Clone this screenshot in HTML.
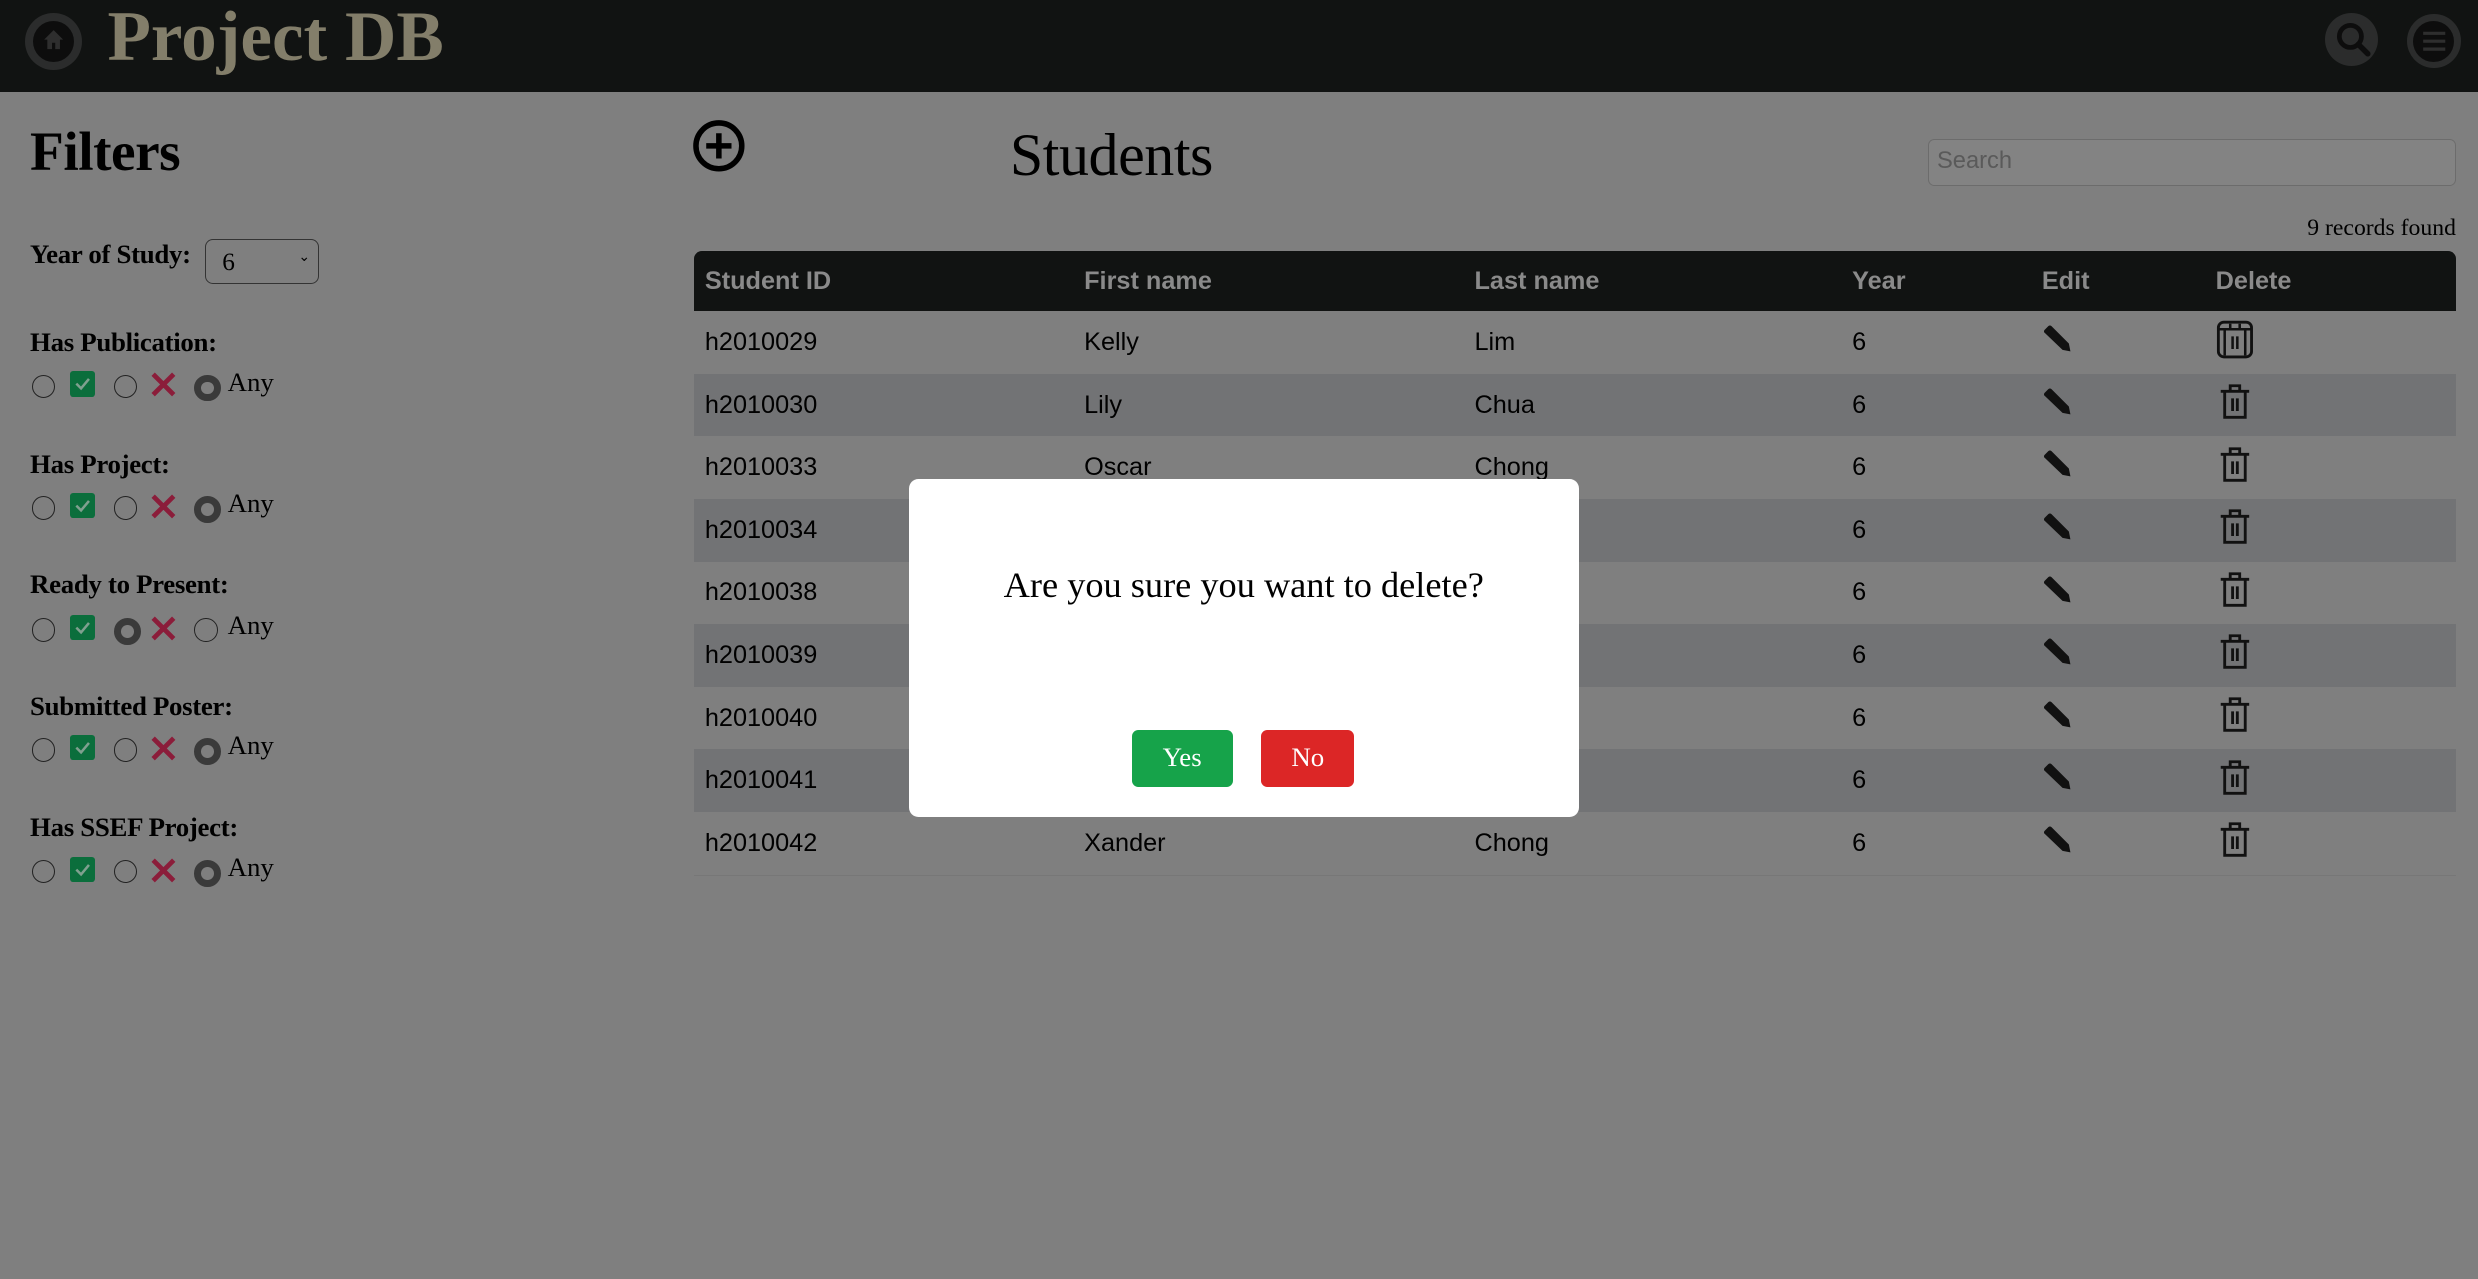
<!DOCTYPE html>
<html><head><meta charset="utf-8"><style>
html{zoom:1.5804}
body{margin:0;width:1568px;height:809px;background:#7f7f7f;position:relative;overflow:hidden;font-family:"Liberation Serif",serif;color:#000}
.a{position:absolute}
.hdr{left:0;top:0;width:1568px;height:58px;background:#111312}
.sans{font-family:"Liberation Sans",sans-serif}
.lbl{font-size:17px;font-weight:bold;font-family:"Liberation Serif",serif;letter-spacing:-0.2px}
.rad{width:15px;height:15px;border:1px solid #222;border-radius:50%;box-sizing:border-box}
.chk{width:16px;height:16px;background:#0b6e3c;border-radius:2px}
.any{width:17px;height:17px;border:5px solid #3a3a3a;border-radius:50%;box-sizing:border-box;background:#7f7f7f}
table{border-collapse:collapse;font-size:16px}
td,th{height:39.6px;padding:0 0 0 7px;text-align:left}
th{background:#111312;color:#8a8a8a;height:38px;font-weight:bold}
tr.o td{background:#727375}
</style></head><body>
<div class="a hdr"></div>
<div class="a" style="left:16px;top:8px;width:36px;height:36px;border-radius:50%;background:#2b2c2c"></div>
<div class="a" style="left:21px;top:13px;width:26px;height:26px;border-radius:50%;background:#0d0d0d"></div>
<svg class="a" style="left:26px;top:17px" width="16" height="16" viewBox="0 0 16 16"><path d="M8 2L2 8h2v6h3v-4h2v4h3V8h2z" fill="#2e2e2e"/></svg>
<div class="a" style="left:68px;top:-2px;font-size:45px;font-weight:bold;color:#837e6a">Project DB</div>
<div class="a" style="left:1471px;top:8px;width:34px;height:34px;border-radius:50%;background:#2b2c2c"></div>
<svg class="a" style="left:1476px;top:12px" width="26" height="26" viewBox="0 0 26 26"><circle cx="11" cy="11" r="7" stroke="#0d0d0d" stroke-width="3" fill="none"/><path d="M16 16l6 6" stroke="#0d0d0d" stroke-width="3.5" stroke-linecap="round"/></svg>
<div class="a" style="left:1523px;top:9px;width:34px;height:34px;border-radius:50%;background:#2b2c2c"></div>
<div class="a" style="left:1527px;top:13px;width:26px;height:26px;border-radius:50%;background:#0d0d0d"></div>
<svg class="a" style="left:1531px;top:17px" width="18" height="18"><path d="M2 4h14M2 9h14M2 14h14" stroke="#2e2e2e" stroke-width="2"/></svg>

<div class="a" style="left:19px;top:76px;font-size:35px;font-weight:bold;letter-spacing:-0.3px">Filters</div>
<div class="a lbl" style="left:19px;top:151px">Year of Study:</div>
<div class="a" style="left:130px;top:151px;width:72px;height:29px;border:1px solid #333;border-radius:5px;box-sizing:border-box;font-size:16px;padding:5px 10px">6<span style="position:absolute;right:5px;top:6px;font-size:9px">⌄</span></div>

<div class="a lbl" style="left:19px;top:207px">Has Publication:</div>
<div class="a lbl" style="left:19px;top:284px">Has Project:</div>
<div class="a lbl" style="left:19px;top:360px">Ready to Present:</div>
<div class="a lbl" style="left:19px;top:437px">Submitted Poster:</div>
<div class="a lbl" style="left:19px;top:514px">Has SSEF Project:</div>

<script>
var ys=[235,312,389,465,542];
ys.forEach(function(y,i){
 var h='';
 h+='<div class="a rad" style="left:20px;top:'+(y+2)+'px"></div>';
 h+='<div class="a chk" style="left:44px;top:'+(y)+'px"><svg width="16" height="16"><path d="M4 8l3 3 5-6" stroke="#7fa08f" stroke-width="1.6" fill="none"/></svg></div>';
 if(i==2) h+='<div class="a any" style="left:72px;top:'+(y+2)+'px"></div>';
 else h+='<div class="a rad" style="left:72px;top:'+(y+2)+'px"></div>';
 h+='<svg class="a" style="left:95px;top:'+(y)+'px" width="17" height="17"><path d="M2 2l13 13M15 2L2 15" stroke="#8b1d3a" stroke-width="3"/></svg>';
 if(i==2) h+='<div class="a rad" style="left:123px;top:'+(y+2)+'px"></div>';
 else h+='<div class="a any" style="left:123px;top:'+(y+2)+'px"></div>';
 h+='<div class="a" style="left:144px;top:'+(y-3)+'px;font-size:17px">Any</div>';
 document.write(h);
});
</script>

<svg class="a" style="left:438px;top:75px" width="34" height="34" viewBox="0 0 34 34"><circle cx="17" cy="17" r="14.5" stroke="#000" stroke-width="3.5" fill="none"/><path d="M17 9v16M9 17h16" stroke="#000" stroke-width="3.5"/></svg>
<div class="a" style="left:639px;top:76px;font-size:38px;letter-spacing:-0.3px">Students</div>
<div class="a sans" style="left:1220px;top:88px;width:334px;height:30px;border:1px solid #6c6c6c;border-radius:4px;box-sizing:border-box;background:#838383;color:#5a5a5a;font-size:15px;padding:5px 5px">Search</div>
<div class="a" style="right:14px;top:136px;font-size:15px">9 records found</div>

<div class="a" style="left:439px;top:159px;width:1115px;border-radius:5px 5px 0 0;overflow:hidden;border-bottom:1px solid #777">
<table class="sans" style="width:1115px">
<tr><th style="width:233px">Student ID</th><th style="width:240px">First name</th><th style="width:232px">Last name</th><th style="width:113px">Year</th><th style="width:103px">Edit</th><th>Delete</th></tr>
<script>
var d=[["h2010029","Kelly","Lim"],["h2010030","Lily","Chua"],["h2010033","Oscar","Chong"],["h2010034","",""],["h2010038","",""],["h2010039","",""],["h2010040","",""],["h2010041","",""],["h2010042","Xander","Chong"]];
var pen='<svg width="20" height="20" viewBox="0 0 20 20"><path d="M1.5 4.5L4 2a1.5 1.5 0 0 1 2 0L17 13l1 5-5-1L2 6.5a1.5 1.5 0 0 1-.5-2z" fill="#111"/></svg>';
var bin='<svg width="24" height="26" viewBox="0 0 24 26"><path d="M3 6.5h18M9 6V3h6v3M5.5 7v16h13V7M10.5 11v8M13.5 11v8" stroke="#111" stroke-width="1.8" fill="none"/></svg>';
var bin1='<svg width="24" height="26" viewBox="0 0 24 26"><rect x="1.5" y="2" width="21" height="22" rx="3.5" stroke="#111" stroke-width="1.8" fill="none"/><path d="M2 6.5h20M5.5 7v16M18.5 7v16M9 3v3M15 3v3M10.5 11v8M13.5 11v8" stroke="#111" stroke-width="1.6" fill="none"/></svg>';
d.forEach(function(r,i){document.write('<tr'+(i%2?' class="o"':'')+'><td>'+r[0]+'</td><td>'+r[1]+'</td><td>'+r[2]+'</td><td>6</td><td>'+pen+'</td><td>'+(i==0?bin1:bin)+'</td></tr>');});
</script>
</table></div>

<div class="a" style="left:575px;top:303px;width:424px;height:214px;background:#fff;border-radius:6px"></div>
<div class="a" style="left:575px;top:357px;width:424px;text-align:center;font-size:23px">Are you sure you want to delete?</div>
<div class="a" style="left:716px;top:462px;width:64px;height:36px;background:#16a34a;border-radius:4px;color:#fff;font-size:17px;text-align:center;line-height:35px">Yes</div>
<div class="a" style="left:798px;top:462px;width:59px;height:36px;background:#dc2626;border-radius:4px;color:#fff;font-size:17px;text-align:center;line-height:35px">No</div>
</body></html>
